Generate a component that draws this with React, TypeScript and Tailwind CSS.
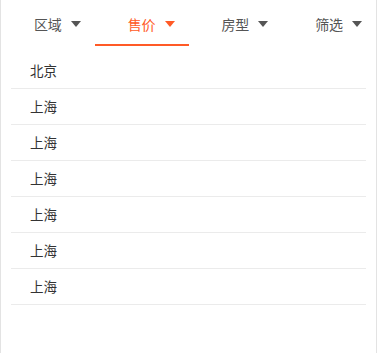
import { FC, useState } from "react";

const tabs = ["区域", "售价", "房型", "筛选"];
const cities = ["北京", "上海", "上海", "上海", "上海", "上海", "上海"];

const Caret: FC<{ active: boolean }> = ({ active }) => (
  <svg
    width="10"
    height="6"
    viewBox="0 0 10 6"
    className={`absolute left-full top-1/2 ml-[9px] -translate-y-1/2 ${active ? "fill-[#ff5a26]" : "fill-[#555555]"}`}
  >
    <path d="M0 0 H10 L5 6 Z" />
  </svg>
);

const App: FC = () => {
  const [current, setCurrent] = useState(1);

  return (
    <div
      className="w-[377px] h-[353px] bg-white border-l border-r border-[#e3e3e3] overflow-hidden"
      style={{ fontFamily: '"Noto Sans CJK SC", "Noto Sans", sans-serif' }}
    >
      <div className="flex flex-row h-[46px]">
        {tabs.map((tab, i) => (
          <button
            key={i}
            onClick={() => setCurrent(i)}
            className={`flex-1 flex items-center justify-center pt-[3px] border-b-2 ${
              current == i ? "border-[#ff5a26] text-[#ff5a26]" : "border-transparent text-[#555555]"
            }`}
          >
            <span className="relative text-sm font-normal leading-none">
              {tab}
              <Caret active={current == i} />
            </span>
          </button>
        ))}
      </div>
      <ul className="mx-[10px] mt-[7px]">
        {cities.map((city, i) => (
          <li
            key={i}
            className="h-9 flex items-center pl-[19px] border-b border-[#ebebeb] text-[13.5px] text-[#333333]"
          >
            {city}
          </li>
        ))}
      </ul>
    </div>
  );
};

export default App;
